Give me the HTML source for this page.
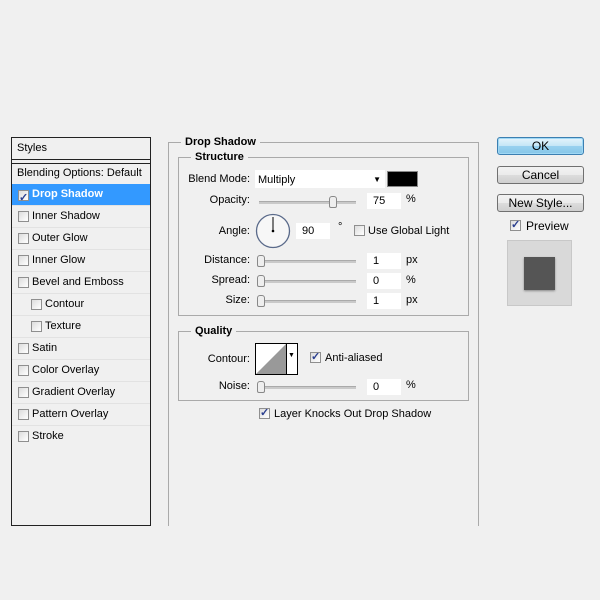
<!DOCTYPE html>
<html><head><style>
body{margin:0;width:600px;height:600px;background:#f0f0f0;font-family:"Liberation Sans",Tahoma,sans-serif;font-size:11px;color:#000;position:relative;overflow:hidden}
.a{position:absolute}
.cb{position:absolute;width:9px;height:9px;border:1px solid #8f8f8f;background:linear-gradient(135deg,#ddd,#fff)}
.cb.on::after{content:"✓";position:absolute;left:0px;top:-3px;font-size:11px;color:#2b3f8f;font-weight:bold}
.row{position:absolute;left:12px;width:138px;height:21px;border-bottom:1px solid #e2e2e2;line-height:21px}
.row span{position:absolute;left:20px}
.lbl{position:absolute;text-align:right;width:80px}
.in{position:absolute;width:34px;height:16px;background:#fff;line-height:17px;text-indent:6px}
.trk{position:absolute;height:2px;background:#c9c9c9;border-top:1px solid #aaa}
.th{position:absolute;width:6px;height:10px;border:1px solid #888;border-radius:3px 3px 2px 2px;background:#eee}
.grp{position:absolute;border:1px solid #aaa}
.gt{position:absolute;background:#f0f0f0;font-weight:bold;padding:0 4px}
.btn{position:absolute;left:497px;width:85px;height:16px;border:1px solid #707070;border-radius:3px;background:linear-gradient(#f2f2f2,#ebebeb 50%,#dcdcdc 51%,#cfcfcf);text-align:center;line-height:16px;font-size:12px}
</style></head><body>
<div class="a" style="left:11px;top:137px;width:138px;height:387px;border:1px solid #222;background:#f0f0f0"></div>
<div class="a" style="left:17px;top:142px">Styles</div>
<div class="a" style="left:12px;top:159px;width:138px;height:3px;border-top:1px solid #222;border-bottom:1px solid #222"></div>
<div class="row" style="top:163px"><span style="left:5px">Blending Options: Default</span></div>
<div class="row" style="top:184px;background:#3399ff;color:#fff;font-weight:bold"><div class="cb on" style="left:6px;top:6px"></div><span>Drop Shadow</span></div>
<div class="row" style="top:206px"><div class="cb" style="left:6px;top:5px"></div><span>Inner Shadow</span></div>
<div class="row" style="top:228px"><div class="cb" style="left:6px;top:5px"></div><span>Outer Glow</span></div>
<div class="row" style="top:250px"><div class="cb" style="left:6px;top:5px"></div><span>Inner Glow</span></div>
<div class="row" style="top:272px"><div class="cb" style="left:6px;top:5px"></div><span>Bevel and Emboss</span></div>
<div class="row" style="top:294px"><div class="cb" style="left:19px;top:5px"></div><span style="left:33px">Contour</span></div>
<div class="row" style="top:316px"><div class="cb" style="left:19px;top:5px"></div><span style="left:33px">Texture</span></div>
<div class="row" style="top:338px"><div class="cb" style="left:6px;top:5px"></div><span>Satin</span></div>
<div class="row" style="top:360px"><div class="cb" style="left:6px;top:5px"></div><span>Color Overlay</span></div>
<div class="row" style="top:382px"><div class="cb" style="left:6px;top:5px"></div><span>Gradient Overlay</span></div>
<div class="row" style="top:404px"><div class="cb" style="left:6px;top:5px"></div><span>Pattern Overlay</span></div>
<div class="row" style="top:426px;border:none"><div class="cb" style="left:6px;top:5px"></div><span>Stroke</span></div>

<div class="grp" style="left:168px;top:142px;width:309px;height:383px;border-bottom:none"></div>
<div class="gt" style="left:181px;top:136px">Drop Shadow</div>
<div class="grp" style="left:178px;top:157px;width:289px;height:157px"></div>
<div class="gt" style="left:191px;top:151px">Structure</div>
<div class="lbl" style="left:170px;top:173px">Blend Mode:</div>
<div class="a" style="left:255px;top:170px;width:130px;height:18px;background:#fff;line-height:20px;text-indent:3px">Multiply<span style="position:absolute;right:4px;top:0;font-size:8px">▼</span></div>
<div class="a" style="left:387px;top:171px;width:29px;height:14px;background:#000;border:1px solid #888"></div>
<div class="lbl" style="left:170px;top:194px">Opacity:</div>
<div class="trk" style="left:259px;top:201px;width:97px"></div><div class="th" style="left:329px;top:196px"></div>
<div class="in" style="left:367px;top:193px">75</div><div class="a" style="left:406px;top:193px">%</div>
<div class="lbl" style="left:170px;top:225px">Angle:</div>
<svg class="a" style="left:255px;top:213px" width="36" height="36"><circle cx="18" cy="18" r="16.5" fill="#f7f7f7" stroke="#5a6a8a" stroke-width="1.3"/><line x1="18" y1="18" x2="18" y2="4" stroke="#000"/><circle cx="18" cy="18" r="1.3"/></svg>
<div class="in" style="left:296px;top:223px">90</div><div class="a" style="left:338px;top:221px">°</div>
<div class="cb" style="left:354px;top:225px"></div><div class="a" style="left:368px;top:225px">Use Global Light</div>
<div class="lbl" style="left:170px;top:254px">Distance:</div>
<div class="trk" style="left:259px;top:260px;width:97px"></div><div class="th" style="left:257px;top:255px"></div>
<div class="in" style="left:367px;top:253px">1</div><div class="a" style="left:406px;top:254px">px</div>
<div class="lbl" style="left:170px;top:274px">Spread:</div>
<div class="trk" style="left:259px;top:280px;width:97px"></div><div class="th" style="left:257px;top:275px"></div>
<div class="in" style="left:367px;top:273px">0</div><div class="a" style="left:406px;top:274px">%</div>
<div class="lbl" style="left:170px;top:294px">Size:</div>
<div class="trk" style="left:259px;top:300px;width:97px"></div><div class="th" style="left:257px;top:295px"></div>
<div class="in" style="left:367px;top:293px">1</div><div class="a" style="left:406px;top:294px">px</div>

<div class="grp" style="left:178px;top:331px;width:289px;height:68px"></div>
<div class="gt" style="left:191px;top:325px">Quality</div>
<div class="lbl" style="left:170px;top:353px">Contour:</div>
<div class="a" style="left:255px;top:343px;width:41px;height:30px;border:1px solid #000;background:#fff">
<svg width="31" height="30" style="position:absolute;left:0;top:0"><polygon points="0,30 30,0 30,30" fill="#999"/></svg>
<div style="position:absolute;left:30px;top:0;width:1px;height:30px;background:#000"></div>
<span style="position:absolute;left:32px;top:8px;font-size:7px">▼</span></div>
<div class="cb on" style="left:310px;top:352px"></div><div class="a" style="left:325px;top:352px">Anti-aliased</div>
<div class="lbl" style="left:170px;top:380px">Noise:</div>
<div class="trk" style="left:259px;top:386px;width:97px"></div><div class="th" style="left:257px;top:381px"></div>
<div class="in" style="left:367px;top:379px">0</div><div class="a" style="left:406px;top:379px">%</div>
<div class="cb on" style="left:259px;top:408px"></div><div class="a" style="left:274px;top:408px">Layer Knocks Out Drop Shadow</div>

<div class="btn" style="top:137px;border-color:#3c7fb1;background:linear-gradient(#e5f4fc,#c4e5f6 50%,#98d1ef 51%,#86c6e8);box-shadow:0 0 0 1px #9fd8f5 inset">OK</div>
<div class="btn" style="top:166px">Cancel</div>
<div class="btn" style="top:194px">New Style...</div>
<div class="cb on" style="left:510px;top:220px"></div><div class="a" style="left:526px;top:219px;font-size:12px">Preview</div>
<div class="a" style="left:507px;top:240px;width:63px;height:64px;background:#d9d9d9;border:1px solid #c8c8c8"></div>
<div class="a" style="left:524px;top:257px;width:31px;height:33px;background:#555;box-shadow:0 1px 2px #888"></div>
</body></html>
